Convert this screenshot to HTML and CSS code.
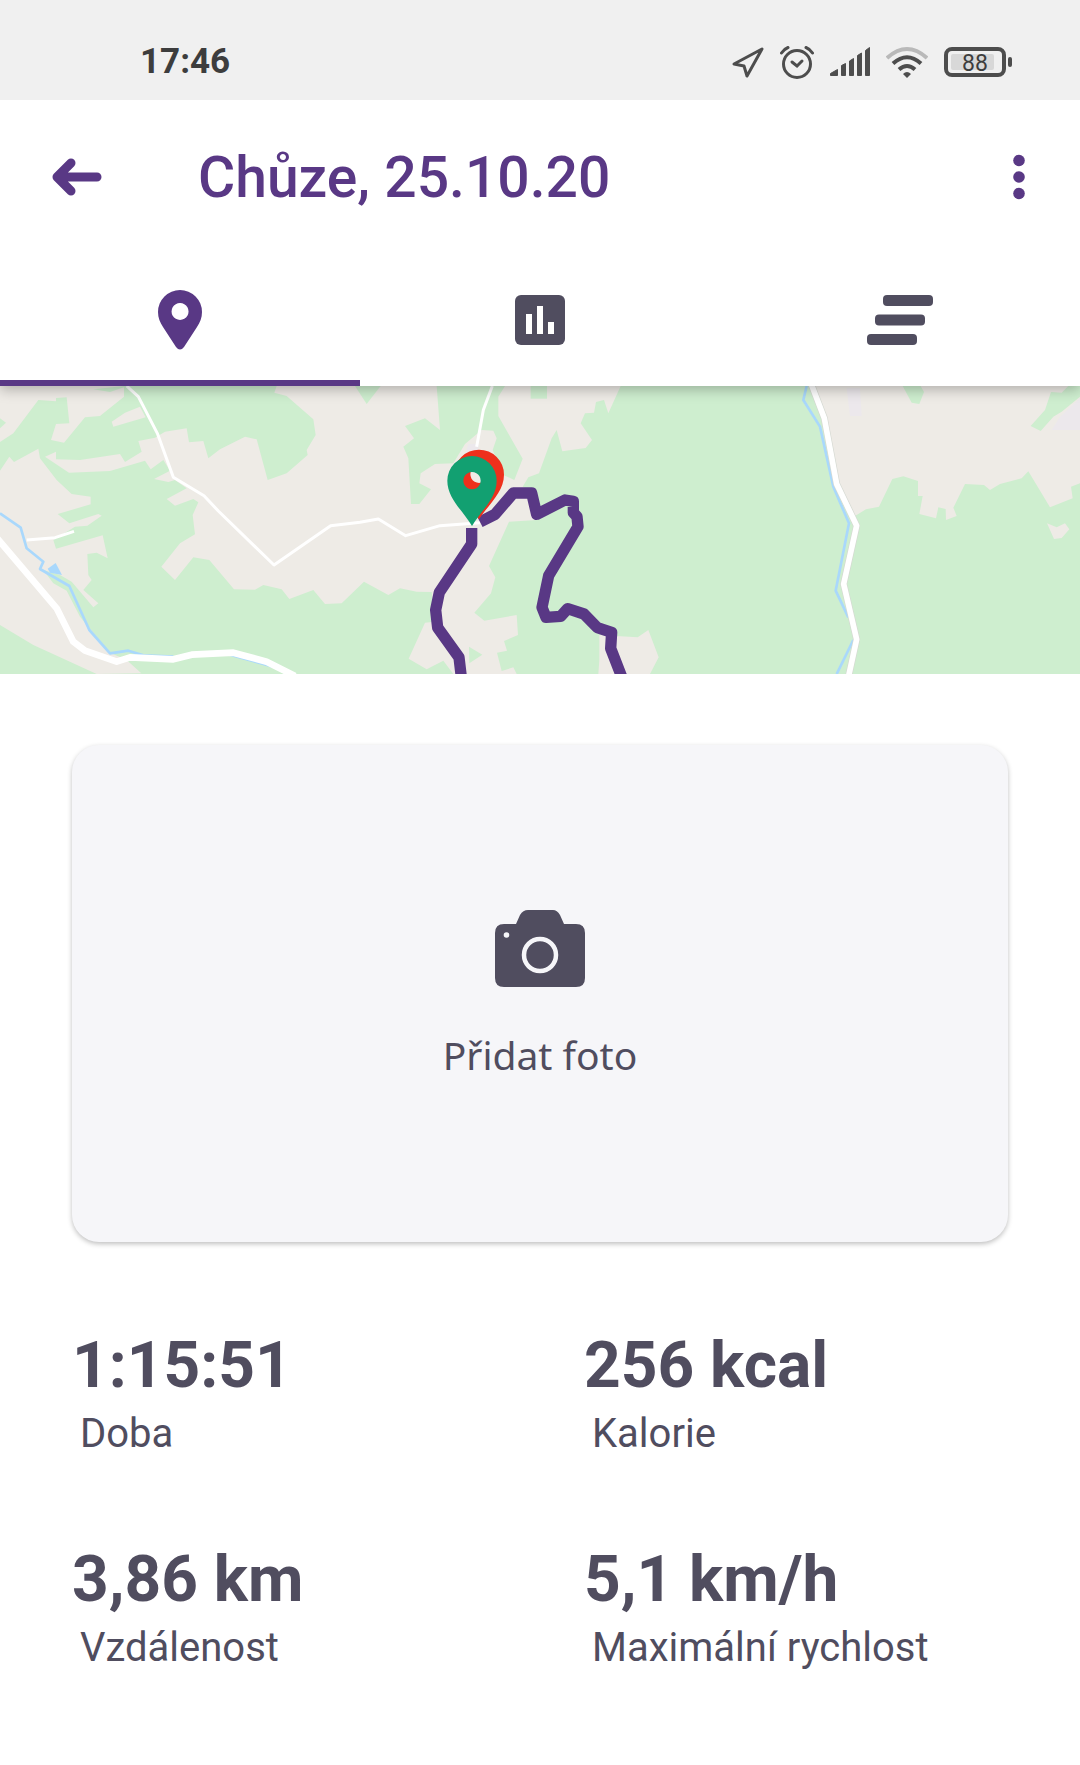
FILE: index.html
```html
<!DOCTYPE html>
<html lang="cs">
  <head>
    <meta charset="utf-8">
    <meta name="viewport" content="width=device-width, initial-scale=1">
    <title>Chůze, 25.10.20</title>
    <link rel="stylesheet" href="styles.css">
  </head>
  <body>

    <div class="status-bar">
      <span class="status-time">17:46</span>
      <div class="status-icons">
        <svg width="32" height="34" viewBox="0 0 32 34"><path d="M2 19 L30 4 L15 31 L12 21 Z" fill="none" stroke="#4d4d4d" stroke-width="3" stroke-linejoin="round"/></svg>
        <svg width="34" height="34" viewBox="0 0 34 34" fill="none" stroke="#4d4d4d" stroke-width="3" stroke-linecap="round">
          <circle cx="17" cy="19" r="13.500"/>
          <path d="M12 17 L17 21 L22 16"/>
          <path d="M1.500 8 Q4 4 8 2.500 M26 2.500 Q30 4 32.500 8"/>
        </svg>
        <svg width="40" height="34" viewBox="0 0 40 34" fill="#4d4d4d" stroke="#4d4d4d" stroke-linejoin="round">
          <path d="M.500 30.500 V28.500 L7.500 24.500 V30.500Z M11.500 30.500 V20.500 L15.500 18.500 V30.500Z M19.500 30.500 V16 L23.500 13.500 V30.500Z M27.500 30.500 V10.500 L31.500 8 V30.500Z M35.500 30.500 V5.500 L39.500 2.500 V30.500Z"/>
        </svg>
        <svg width="42" height="34" viewBox="0 0 42 34" fill="none" stroke-width="4">
          <path d="M1 13 Q21 -5 41 13" stroke="#b9b9b9"/>
          <path d="M7 18.500 Q21 6 35 18.500 M13 24.500 Q21 17.500 29 24.500" stroke="#4d4d4d"/>
          <path d="M17 29 Q21 25 25 29 L21 33Z" fill="#4d4d4d"/>
        </svg>
        <svg width="68" height="34" viewBox="0 0 68 34">
          <rect x="7" y="9" width="43" height="16" rx="2" fill="#d8d8d8"/>
          <rect x="2" y="4" width="58" height="26" rx="6" fill="none" stroke="#4d4d4d" stroke-width="4"/>
          <rect x="64" y="12" width="4" height="10" rx="2" fill="#4d4d4d"/>
          <text class="battery-text" x="31" y="26" text-anchor="middle">88</text>
        </svg>
      </div>
    </div>

    <header class="header">
      <button class="icon-button" aria-label="Zpět">
        <svg width="50" height="38" viewBox="0 0 50 38" fill="none" stroke="#593885" stroke-width="9" stroke-linecap="round" stroke-linejoin="round"><path d="M19 5 L5 19 L19 33 M8 19 H45"/></svg>
      </button>
      <h1 class="header-title">Chůze, 25.10.20</h1>
      <button class="icon-button" aria-label="Další možnosti">
        <svg width="12" height="46" viewBox="0 0 12 46" fill="#593885"><circle cx="6" cy="6.500" r="5.800"/><circle cx="6" cy="23" r="5.800"/><circle cx="6" cy="39.500" r="5.800"/></svg>
      </button>
    </header>

    <nav class="tabs">
      <button class="tab tab-active" aria-label="Mapa">
        <svg width="44" height="60" viewBox="0 0 44 60"><path fill="#593885" fill-rule="evenodd" d="M22 0 A22 22 0 0 1 44 22 C44 28 42 32 39 37 L26 57 Q22 62 18 57 L5 37 C2 32 0 28 0 22 A22 22 0 0 1 22 0Z M22 13 a8.500 8.500 0 1 0 .1 0Z"/></svg>
      </button>
      <button class="tab" aria-label="Grafy">
        <svg width="50" height="50" viewBox="0 0 50 50"><rect width="50" height="50" rx="6" fill="#504d5f"/><path d="M11 19h6v20h-6z M22 11h6v28h-6z M33 27h6v12h-6z" fill="#fff"/></svg>
      </button>
      <button class="tab" aria-label="Úseky">
        <svg width="66" height="50" viewBox="0 0 66 50" fill="#504d5f"><rect x="16" width="50" height="11" rx="4"/><rect x="8" y="19.500" width="50" height="11" rx="4"/><rect y="39" width="50" height="11" rx="4"/></svg>
      </button>
    </nav>

    <main>
      <svg class="map" viewBox="0 18 3240 864" preserveAspectRatio="xMidYMid slice">
        <rect y="18" width="3240" height="864" fill="#ceeecf"/>

        <!-- open land -->
        <g fill="#eeebe6">
          <path d="M0 18 L372 18 L372 50 L300 108 L255 112 L192 188 L153 180 L168 132 L208 130 L200 52 L168 54 V64 L115 60 L40 160 L0 186Z"/>
          <path d="M335 125 L375 98 L420 80 L437 112 L340 140Z"/>
          <path d="M135 230 L168 215 V238 L240 240 L360 222 L375 246 L425 215 L415 183 L465 173 L495 155 L560 145 L567 187 L610 183 L625 235 L660 208 L735 170 L770 178 L803 300 L860 280 L923 225 L920 210 L947 165 L940 118 L860 48 L823 38 L830 18 L1310 18 L1320 150 L1275 115 L1215 138 L1242 175 L1210 200 L1225 235 L1233 372 L1258 372 L1293 328 L1258 310 L1262 280 L1305 252 L1360 250 L1395 192 L1445 150 L1480 152 L1490 175 L1478 210 L1510 285 L1543 300 L1568 236 L1495 108 V50 L1515 18 H1862 L1825 100 L1812 60 L1788 66 L1782 98 L1755 100 L1742 130 L1776 180 L1757 204 L1687 214 L1670 150 L1655 175 L1617 280 L1585 292 L1568 320 L1610 340 V420 L1527 425 L1467 558 L1486 592 L1473 640 L1423 698 L1453 722 L1550 705 L1554 765 L1512 783 L1521 812 L1491 818 L1505 873 L1540 862 L1550 882 H1360 L1330 842 L1280 868 L1226 836 L1275 728 L1305 725 L1295 636 L1250 635 L1200 625 L1165 645 L1092 605 L1025 670 L975 672 L940 630 L868 657 L845 628 L790 615 L765 629 L702 628 L628 540 L580 532 L525 600 L484 560 L540 490 L585 463 L578 405 L595 367 L580 357 L525 377 L500 357 L560 325 L525 300 L505 306 L462 297 L510 272 L490 240 L452 268 L435 242 L330 273 L207 278Z"/>
          <path d="M0 272 L28 230 L42 246 L115 206 L120 235 L170 300 L215 342 L272 350 V373 L173 402 L208 430 L295 402 L305 407 L262 437 L225 440 L160 480 L168 506 L308 466 L323 535 L290 518 L262 522 L265 585 L275 600 L250 630 L295 670 L280 682 L215 605 L180 585 L130 570 L160 610 L200 632 L240 710 L330 818 L380 840 L424 880 L290 882 L100 795 L0 735Z"/>
          <path d="M1798 765 L1913 772 L1945 750 L1976 832 L1950 882 H1795 L1798 840Z"/>
          <path d="M2445 18 H3240 V310 L3213 320 L3218 355 L3150 382 L3085 274 L3065 295 L3000 312 L2970 330 L2952 315 L2895 312 L2860 383 L2870 408 L2838 420 L2837 387 L2815 382 L2808 415 L2758 402 L2768 348 H2754 V303 L2710 289 L2677 297 L2637 380 L2598 388 L2565 408 L2505 300 L2460 100Z"/>
          <path d="M3141 430 L3170 442 L3195 430 L3208 448 L3185 474 L3162 477Z"/>
        </g>
        <g fill="#ceeecf">
          <path d="M280 28 L330 36 L372 22 V18Z"/>
          <path d="M0 115 L18 128 L0 145Z"/>
          <path d="M1065 18 L1100 72 L1142 18Z"/>
          <path d="M1592 18 H1641 V56 H1592Z"/>
          <path d="M1407 800 L1447 824 L1408 850Z"/>
          <path d="M2708 18 L2735 68 L2758 72 L2772 36 L2762 18Z"/>
          <path d="M3153 36 L3185 38 L3205 18 H3240 V50 L3185 95 L3160 110 L3122 153 L3092 138 L3135 90Z"/>
        </g>
        <path d="M2540 25 H2580 L2585 108 H2550Z M3240 55 L3180 110 L3155 150 H3240Z M1405 192 H1435 V225 H1395Z" fill="#ece8ec"/>

        <!-- water -->
        <g fill="none" stroke="#a9d8fc" stroke-width="8" stroke-linejoin="round">
          <path d="M0 400 L62 443 L80 505 L130 545 L120 567 L208 618 L268 750 L330 820 L385 812 L430 826 L520 830 M690 824 L820 860"/>
          <path d="M2420 18 L2410 60 L2460 140 L2500 320 L2547 430 L2507 632 L2545 712 M2560 780 L2510 882"/>
          <path d="M143 566 L167 549 L186 585 L150 578Z" fill="#a9d8fc" stroke="none"/>
        </g>

        <!-- roads -->
        <g fill="none" stroke-linejoin="round">
          <path d="M380 18 L415 50 L472 160 L520 292 L612 347 L655 393 L822 555 L992 437 L1080 427 L1135 417 L1217 467 L1320 437 L1440 428 M80 480 L165 473 L222 454" stroke="#fff" stroke-width="9"/>
          <path d="M1477 18 L1450 90 L1430 200" stroke="#fff" stroke-width="9"/>
          <path d="M-15 467 L170 685 L220 785 L255 812 L350 845 L390 832 L520 838 L575 824 L700 818 L800 845 L885 888" stroke="#fff" stroke-width="20"/>
          <path d="M2433 10 L2473 115 L2510 312 L2570 437 L2531 612 L2570 778 L2545 892" stroke="#d5d9d2" stroke-width="21"/>
          <path d="M2433 10 L2473 115 L2510 312 L2570 437 L2531 612 L2570 778 L2545 892" stroke="#fff" stroke-width="17"/>
        </g>

        <!-- walked route -->
        <g fill="none" stroke="#593885" stroke-width="34" stroke-linejoin="round">
          <path d="M1415 444 V492 L1318 637 L1307 690 L1313 743 L1377 832 L1385 900"/>
          <path d="M1440 426 L1485 403 L1540 339 H1595 L1610 403 L1695 360 L1720 364 V398 L1731 410 L1734 440 L1646 587 L1626 682 L1638 712 L1682 709 L1703 686 L1752 702 L1792 743 L1835 757 L1832 805 L1865 890"/>
        </g>

        <path fill="#ee301c" fill-rule="evenodd" d="M1362 284 a75 75 0 0 1 150 0 C1512 336 1466 372 1437 418 C1408 372 1362 336 1362 284Z M1437 257 a26 26 0 1 0 .1 0Z"/>
        <path fill="#12a071" fill-rule="evenodd" d="M1342 302 a74 74 0 0 1 148 0 C1490 354 1445 390 1416 438 C1387 390 1342 354 1342 302Z M1416 276 a26 26 0 1 0 .1 0Z"/>
      </svg>

      <button class="photo-card">
        <svg width="90" height="77" viewBox="0 0 90 77">
          <path fill="#504d5f" d="M9 14 H21 L25 5 Q28 0 33 0 H58 Q62 0 65 5 L69 14 H81 Q90 14 90 23 V68 Q90 77 81 77 H9 Q0 77 0 68 V23 Q0 14 9 14Z"/>
          <circle cx="45" cy="45" r="16" fill="none" stroke="#f6f6f9" stroke-width="4.500"/>
          <circle cx="11.500" cy="25" r="2.800" fill="#f6f6f9"/>
        </svg>
        <span>Přidat foto</span>
      </button>

      <dl class="stats">
        <div class="stat">
          <dd class="stat-value">1:15:51</dd>
          <dt class="stat-label">Doba</dt>
        </div>
        <div class="stat">
          <dd class="stat-value">256 kcal</dd>
          <dt class="stat-label">Kalorie</dt>
        </div>
        <div class="stat">
          <dd class="stat-value">3,86 km</dd>
          <dt class="stat-label">Vzdálenost</dt>
        </div>
        <div class="stat">
          <dd class="stat-value">5,1 km/h</dd>
          <dt class="stat-label">Maximální rychlost</dt>
        </div>
      </dl>
    </main>

  </body>
</html>
```

FILE: styles.css
```css
body {
  margin: 0;
  font-family: Roboto, "Liberation Sans", sans-serif;
  background-color: #fff;
  color: #504d5f;
}

button {
  border: none;
  padding: 0;
  background: none;
  color: inherit;
  cursor: pointer;
}

svg {
  display: block;
}

/* phone status bar */
.status-bar {
  display: flex;
  justify-content: space-between;
  align-items: center;
  height: 76px;
  padding: 24px 68px 0 140px;
  background-color: #f0f0f0;
}

.status-time {
  font-size: 35px;
  line-height: 36px;
  font-weight: 700;
  color: #3d3d3d;
}

.status-icons {
  display: flex;
  gap: 16px;
}

.battery-text {
  font-size: 23px;
  font-weight: 400;
  fill: #3d3d3d;
}

/* sits above the tabs so their shadow only falls on the map */
.header {
  display: flex;
  position: relative;
  z-index: 2;
  align-items: center;
  height: 154px;
  padding: 0 55px 0 52px;
  background-color: #fff;
}

.header-title {
  flex: 1;
  margin: 0 0 0 96px;
  font-size: 57px;
  font-weight: 500;
  color: #593885;
}

.tabs {
  display: flex;
  position: relative;
  z-index: 1;
  height: 132px;
  background-color: #fff;
  box-shadow: 0 4px 12px rgba(0, 0, 0, 0.25);
}

.tab {
  display: flex;
  flex: 1;
  justify-content: center;
  align-items: center;
  border-top: 6px solid transparent;
  border-bottom: 6px solid transparent;
}

.tab-active {
  border-bottom-color: #593885;
}

.map {
  width: 100%;
  height: 288px;
}

.photo-card {
  display: flex;
  flex-direction: column;
  justify-content: center;
  align-items: center;
  gap: 48px;
  box-sizing: border-box;
  width: calc(100% - 144px);
  height: 497px;
  margin: 71px 72px 0;
  padding-bottom: 2px;
  border-radius: 27px;
  background-color: #f6f6f9;
  box-shadow: 0 2px 5px rgba(0, 0, 0, 0.25);
  font-family: "Noto Sans", "Open Sans", sans-serif;
  font-size: 39px;
  line-height: 40px;
}

.stats {
  display: grid;
  grid-template-columns: 1fr 1fr;
  gap: 92px 88px;
  margin: 0;
  padding: 92px 72px;
}

.stat {
  display: flex;
  flex-direction: column;
  gap: 14px;
}

.stat-value {
  margin: 0;
  font-size: 64px;
  line-height: 64px;
  font-weight: 700;
}

.stat-label {
  padding-left: 8px;
  font-size: 40px;
  line-height: 44px;
}
```
